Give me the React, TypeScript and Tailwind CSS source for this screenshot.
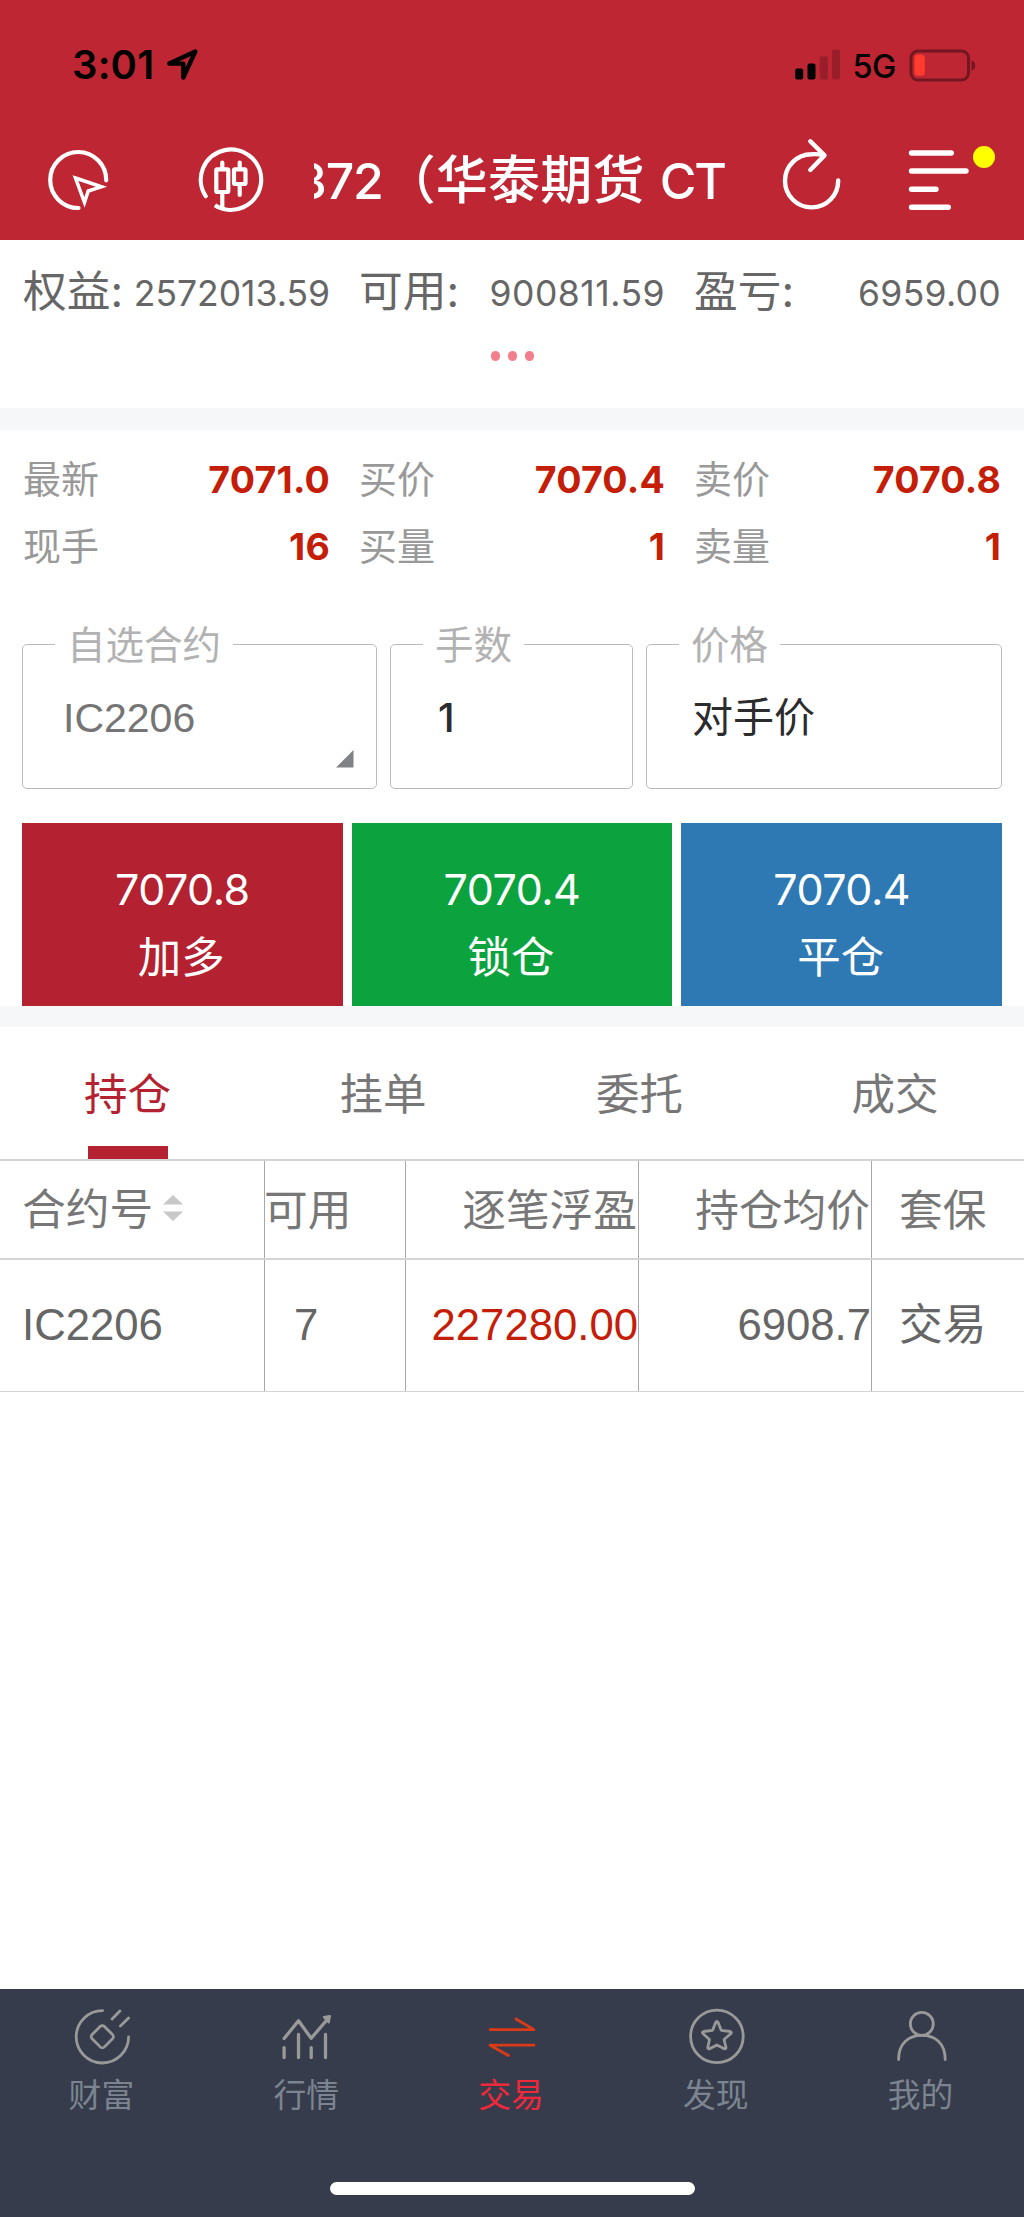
import type { ReactNode } from "react";

const sans = "font-['Inter','Noto_Sans_CJK_SC',sans-serif]";
const arial = "font-['Liberation_Sans','Noto_Sans_CJK_SC',sans-serif]";

function StatusBar() {
  return (
    <div className="flex h-[130px] items-center pl-[72px] pr-[46px]">
      <span className="text-[40px] font-semibold leading-[40px] tracking-[0.2px] text-black">3:01</span>
      <svg className="ml-[12px]" width="34" height="34" viewBox="165 49 34 34" fill="none" stroke="#000" strokeWidth="4.4" strokeLinejoin="round">
        <path d="M194.3 52.5 168.3 64.6H182.3V78.6Z" />
      </svg>
      <svg className="ml-auto" width="46" height="32" viewBox="793.5 49.5 46 32">
        <rect x="793.7" y="69" width="8" height="11" rx="2" fill="#000" />
        <rect x="806" y="64" width="8" height="16" rx="2" fill="#000" />
        <rect x="818.3" y="57" width="8" height="23" rx="2" fill="#981e29" />
        <rect x="830.6" y="50" width="8" height="30" rx="2" fill="#981e29" />
      </svg>
      <span className="ml-[12px] mt-[3px] w-[44px] text-[32.5px] font-medium leading-[32px] tracking-[-0.7px] text-black">5G</span>
      <svg className="ml-[12.5px] mr-px" width="68" height="33" viewBox="909.5 48.5 68 33">
        <rect x="911.5" y="50.5" width="57.5" height="29" rx="7" fill="none" stroke="#721720" strokeWidth="3" />
        <path d="M972 60c5 1.5 5 8.5 0 10Z" fill="#721720" />
        <rect x="915" y="54" width="10.3" height="21.3" rx="3.5" fill="#ff3b30" />
      </svg>
    </div>
  );
}

function TitleBar() {
  return (
    <div className="flex h-[109px] items-start pl-[44px]">
      <svg width="70" height="90" viewBox="44 130 70 90" fill="none" stroke="#fff" strokeWidth="4.2" strokeLinecap="round">
        <path d="M106.2 180.3A28 28 0 1 0 78.5 208" />
        <path d="M75.500 178 101.500 186.800 88.200 191 84.500 202.500Z" strokeWidth="3.5" strokeLinecap="butt" strokeMiterlimit="10" />
      </svg>
      <svg className="ml-[81px]" width="72" height="90" viewBox="195 130 72 90" fill="none" stroke="#fff" strokeWidth="4.2" strokeLinecap="round">
        <path d="M205.7 196.2A30.2 30.2 0 1 1 215 205.3Q218.5 208 222.7 208.7" />
        <path d="M222.300 162.500V168M222.300 193V208M239.700 162.500V168M239.700 185V195" />
        <rect x="216.3" y="169.3" width="12" height="22.7" rx="1" />
        <rect x="234" y="169.3" width="11.5" height="14.7" rx="1" />
      </svg>
      <div className="ml-[47px] mt-[11px] flex h-[80px] w-[411px] justify-end overflow-hidden whitespace-nowrap text-[52px] font-medium leading-[80px] text-white">
        <span className="text-[50px] tracking-[-1.2px]">372</span>
        <span className="ml-[1px] tracking-[0.2px]">（华泰期货</span>
        <span className="ml-[15px] text-[50px] tracking-[-2px]">CT</span>
      </div>
      <svg className="ml-[55px]" width="66" height="90" viewBox="780 130 66 90" fill="none" stroke="#fff" strokeWidth="4.4" strokeLinecap="round" strokeLinejoin="round">
        <path d="M838.200 180.500A26.600 26.600 0 1 1 811.500 154.200Q818 153.700 824 155.300" />
        <path d="M810.300 141.300 824.500 155.400 810.300 170" />
      </svg>
      <svg className="ml-[60px]" width="90" height="90" viewBox="906 130 90 90" fill="none" stroke="#fff" strokeWidth="5.4" strokeLinecap="round">
        <path d="M911.500 153H951.300M911.500 171H966M911.500 189.200H936M911.500 207.200H948.300" />
        <circle cx="984" cy="157" r="11" fill="#ffff00" stroke="none" />
      </svg>
    </div>
  );
}

const columns = "grid grid-cols-[307px_306px_307px] gap-x-[29px] px-[23px] whitespace-nowrap";

function Account() {
  const items = [
    ["权益:", "2572013.59", "tracking-[0px]"],
    ["可用:", "900811.59", "tracking-[0.5px]"],
    ["盈亏:", "6959.00", "tracking-[0.3px]"],
  ];
  return (
    <section className="h-[168px] pt-[22px]">
      <div className={columns}>
        {items.map(([label, value, tracking]) => (
          <div key={label} className="flex h-[60px] items-center justify-between text-[#666]">
            <span className="text-[43.7px] leading-[60px]">{label}</span>
            <span className={`mt-[5px] text-[35.5px] leading-[54px] ${tracking}`}>{value}</span>
          </div>
        ))}
      </div>
      <div className="ml-[1px] mt-[29.5px] flex justify-center gap-[7.5px]">
        <i className="size-[9.5px] rounded-full bg-[#f27f8c]" />
        <i className="size-[9.5px] rounded-full bg-[#f27f8c]" />
        <i className="size-[9.5px] rounded-full bg-[#f27f8c]" />
      </div>
    </section>
  );
}

function Quotes() {
  const items = [
    ["最新", "7071.0"],
    ["买价", "7070.4"],
    ["卖价", "7070.8"],
    ["现手", "16"],
    ["买量", "1"],
    ["卖量", "1"],
  ];
  return (
    <section className={`${columns} pt-[17px]`}>
      {items.map(([label, value]) => (
        <div key={label} className="flex h-[67.5px] items-center justify-between">
          <span className="-mt-[3px] text-[38px] leading-[60px] text-[#999]">{label}</span>
          <span className="-mt-[1px] text-[37.5px] font-[650] leading-[60px] tracking-[0.2px] text-[#c41d08]">{value}</span>
        </div>
      ))}
    </section>
  );
}

function Field({ label, className, children }: { label: string; className: string; children: ReactNode }) {
  return (
    <fieldset className={`relative h-[165px] rounded-[5px] border border-[#bcbcbc] ${className}`}>
      <legend className="ml-[32px] px-3 text-[38.5px] leading-[42px] text-[#b2b2b2]">{label}</legend>
      {children}
    </fieldset>
  );
}

function OrderForm() {
  return (
    <section className="mt-[42px] flex gap-[13px] px-[22px]">
      <Field label="自选合约" className="w-[355px]">
        <div className={`ml-[40px] mt-[22px] text-[41px] leading-[60px] text-[#757575] ${arial}`}>IC2206</div>
        <svg className="absolute bottom-[20px] right-[22px]" width="18" height="18" viewBox="0 0 18 18">
          <path d="M17.5 0V17.5H0Z" fill="#808285" />
        </svg>
      </Field>
      <Field label="手数" className="w-[243px]">
        <div className="ml-[47px] mt-[22px] text-[40px] font-medium leading-[60px] text-[#2c2c2e]">1</div>
      </Field>
      <Field label="价格" className="w-[356px]">
        <div className="ml-[45px] mt-[21px] text-[41px] leading-[60px] text-[#2c2c2e]">对手价</div>
      </Field>
    </section>
  );
}

function Actions() {
  const items = [
    ["7070.8", "加多", "bg-[#b42130]"],
    ["7070.4", "锁仓", "bg-[#0ca33f]"],
    ["7070.4", "平仓", "bg-[#2e79b4]"],
  ];
  return (
    <section className="mt-[34px] grid grid-cols-3 gap-[9px] px-[22px]">
      {items.map(([price, name, color]) => (
        <button key={name} className={`flex h-[183px] flex-col items-center pt-[32px] text-white ${color}`}>
          <span className="text-[43px] leading-[68px] tracking-[-0.5px]">{price}</span>
          <span className="mr-[2px] text-[43.5px] leading-[68px]">{name}</span>
        </button>
      ))}
    </section>
  );
}

function Tabs() {
  return (
    <nav className="grid h-[133px] grid-cols-4 text-center text-[43.5px] leading-[134px] text-[#777]">
      <span className="flex flex-col items-center text-[#b42130]">
        <span className="mr-[1px] h-[119px]">持仓</span>
        <i className="h-[14px] w-[80px] bg-[#b42130]" />
      </span>
      <span className="pr-[2px]">挂单</span>
      <span className="pr-[1px]">委托</span>
      <span className="pr-[2px]">成交</span>
    </nav>
  );
}

const tableColumns = "grid grid-cols-[265px_141px_233px_233px_152px] whitespace-nowrap";
const cell = "border-r border-[#a8a8a8]";

function Positions() {
  return (
    <section className="-mt-px border-b border-t-2 border-[#d4d4d4] text-[43.7px]">
      <div className={`${tableColumns} h-[99px] border-b-2 border-[#d4d4d4] leading-[99px] text-[#777]`}>
        <div className={`flex h-[97px] items-center pl-[22px] ${cell}`}>
          <span className="leading-[99px]">合约号</span>
          <svg className="mb-[2px] ml-[10px]" width="20" height="26" viewBox="0 0 20 26" fill="#c8c8c8">
            <path d="M10 0 20 9.500H0ZM10 26 0 16.500H20Z" />
          </svg>
        </div>
        <div className={`h-[97px] -indent-[1px] ${cell}`}>可用</div>
        <div className={`h-[97px] pr-[1px] text-right ${cell}`}>逐笔浮盈</div>
        <div className={`h-[97px] pr-[1px] text-right ${cell}`}>持仓均价</div>
        <div className="h-[97px] pl-[27px]">套保</div>
      </div>
      <div className={`${tableColumns} h-[131px] leading-[130px] text-[#666] ${arial}`}>
        <div className={`pl-[22px] ${cell}`}>IC2206</div>
        <div className={`pl-[29px] ${cell}`}>7</div>
        <div className={`text-right text-[#c41d08] ${cell}`}>227280.00</div>
        <div className={`text-right ${cell}`}>6908.7</div>
        <div className="pl-[27px]">交易</div>
      </div>
    </section>
  );
}

const navIcons = {
  wealth: (
    <svg width="60" height="60" viewBox="72.4 2007 60 60">
      <path d="M103 2010.600A26.200 26.200 0 1 0 129 2036.800M112.500 2019 120.300 2011M120.800 2026 129 2018" />
      <rect x="94" y="2028" width="17.4" height="17.4" rx="3" transform="rotate(45 102.7 2036.7)" />
    </svg>
  ),
  market: (
    <svg className="stroke-[3.3px]" width="60" height="60" viewBox="277.2 2007 60 60">
      <path d="M284.300 2038.500 298.700 2020.800 311.400 2038.300 327 2020M284.300 2047.700V2057.500M298.700 2034.500V2057.500M311.400 2047.700V2057.500M325.700 2034.500V2057.500" />
      <path d="M324 2017 330.200 2016 329 2022.500Z" className="fill-[#999] stroke-[2px]" />
    </svg>
  ),
  trade: (
    <svg width="60" height="60" viewBox="482 2007 60 60">
      <path d="M490 2029.600H534L516 2019M534 2045.200H490L508.500 2055.500" />
    </svg>
  ),
  discover: (
    <svg width="60" height="60" viewBox="686.8 2007 60 60">
      <circle cx="716.7" cy="2036.4" r="26.3" />
      <path d="M715.500 2022.500Q716.700 2020.500 717.900 2022.500L721 2030.300 730 2031.500Q732 2032 730.500 2033.800L723.800 2039.500 725.800 2047.500Q725.800 2049.300 724 2048.800L716.700 2045 709.400 2048.800Q707.600 2049.300 707.600 2047.500L709.300 2039.500 702.900 2033.800Q701.400 2032 703.400 2031.500L712.400 2030.300Z" />
    </svg>
  ),
  me: (
    <svg width="60" height="60" viewBox="891.6 2007 60 60">
      <circle cx="921.4" cy="2023.8" r="11.5" />
      <path d="M898.200 2059.500C898.200 2043 908.500 2035.300 921.500 2035.300S944.800 2043 944.800 2059.500" />
    </svg>
  ),
};

function BottomNav() {
  const items: [keyof typeof navIcons, string][] = [
    ["wealth", "财富"],
    ["market", "行情"],
    ["trade", "交易"],
    ["discover", "发现"],
    ["me", "我的"],
  ];
  return (
    <footer className="mt-auto flex h-[228px] flex-col items-center bg-[#363c4b]">
      <nav className="grid w-full grid-cols-5 pt-[18px]">
        {items.map(([icon, label]) => (
          <div
            key={icon}
            className={`flex flex-col items-center fill-none stroke-[2.8px] [stroke-linecap:round] [stroke-linejoin:round] ${
              icon === "trade" ? "stroke-[#d93a18] text-[#f0283c]" : "stroke-[#999] text-[#7b8490]"
            }`}
          >
            {navIcons[icon]}
            <span className="mr-[2px] mt-[8px] text-[32.8px] leading-[40px]">{label}</span>
          </div>
        ))}
      </nav>
      <div className="ml-[1px] mt-[67px] h-[13px] w-[365px] rounded-full bg-white" />
    </footer>
  );
}

export default function App() {
  return (
    <main className={`flex h-[2217px] w-[1024px] flex-col overflow-hidden bg-white ${sans}`}>
      <header className="h-[239.5px] shrink-0 bg-[#be2633]">
        <StatusBar />
        <TitleBar />
      </header>
      <Account />
      <div className="h-[22px] bg-[#f5f7f9]" />
      <Quotes />
      <OrderForm />
      <Actions />
      <div className="h-[21px] bg-[#f5f7f9]" />
      <Tabs />
      <Positions />
      <BottomNav />
    </main>
  );
}
